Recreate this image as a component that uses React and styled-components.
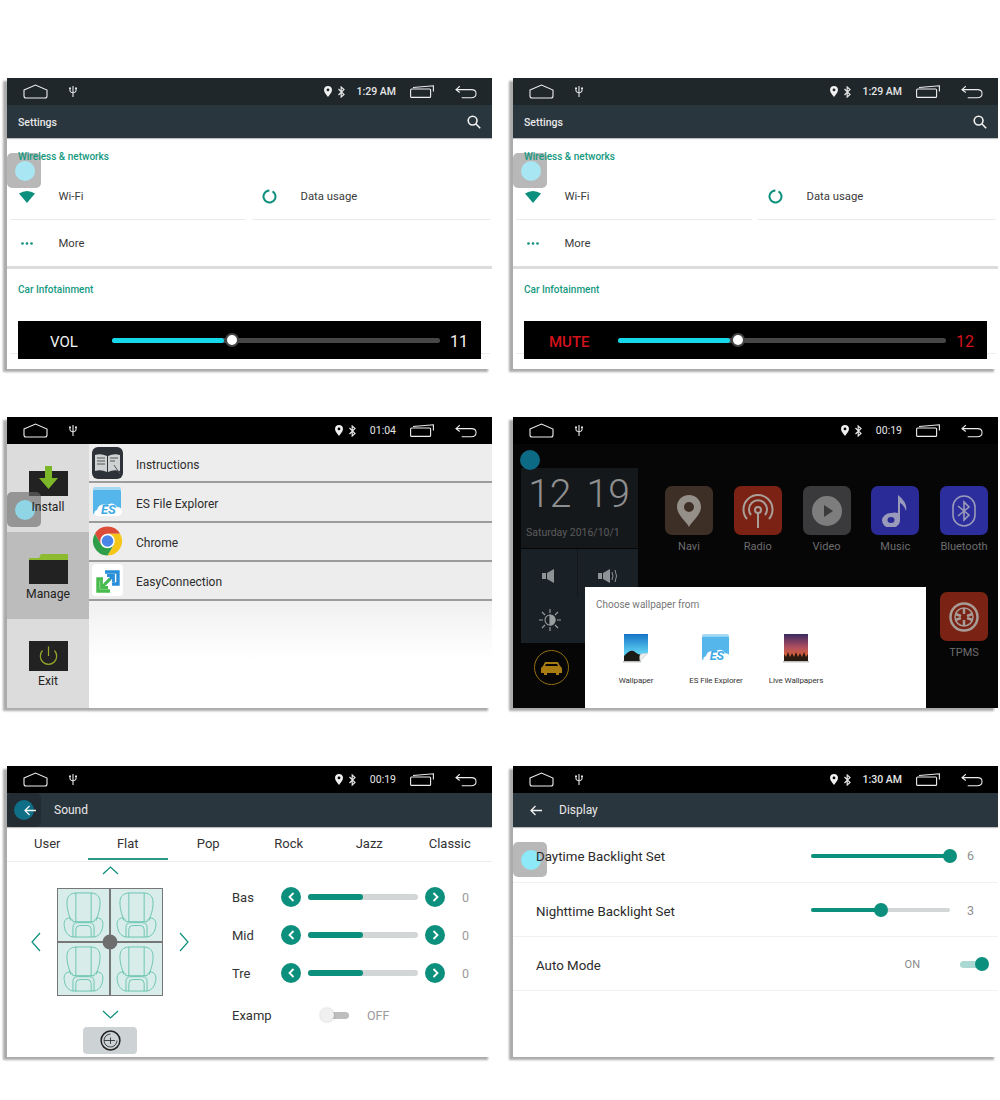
import styled, { createGlobalStyle } from "styled-components";

const TEAL = "#0c8f7c";

const GlobalStyle = createGlobalStyle`
  body {
    margin: 0;
    background: #fff;
    font-family: Roboto, "Liberation Sans", sans-serif;
  }
`;

const Page = styled.div`
  width: 1000px;
  min-height: 1100px;
  padding: 78px 0 0 7px;
  box-sizing: border-box;
`;

const ScreenRow = styled.div`
  display: grid;
  grid-template-columns: 485px 485px;
  column-gap: 21px;
  margin-top: ${(p) => p.$gap || 0}px;
`;

const Screen = styled.div`
  position: relative;
  height: 291px;
  display: flex;
  flex-direction: column;
  overflow: hidden;
  background: ${(p) => p.$bg || "#fff"};
`;

// the shadow is cut by overflow on Screen, so it sits on this wrapper
const ScreenFrame = styled.div`
  box-shadow: -4px 3px 2px rgba(0, 0, 0, 0.33);
`;

const Touch = styled.div`
  position: absolute;
  left: 0;
  top: ${(p) => p.$top}px;
  width: 34px;
  height: 35px;
  border-radius: 5px;
  background: ${(p) => (p.$dark ? "rgba(105,105,105,0.62)" : "rgba(140,140,140,0.62)")};
  display: flex;
  align-items: center;
  justify-content: center;
  &::after {
    content: "";
    width: 20px;
    height: 20px;
    margin-right: -2px;
    border-radius: 50%;
    background: ${(p) => p.$dot || "#a9e6f3"};
  }
`;

const StatusBar = styled.div`
  flex: none;
  height: 27px;
  display: flex;
  align-items: center;
  padding: 0 15px 0 16px;
  background: ${(p) => p.$bg || "#000"};
`;

const StatusRight = styled.div`
  margin-left: auto;
  display: flex;
  align-items: center;
`;

const Clock = styled.span`
  margin: 0 14px 0 14px;
  font-size: 10.5px;
  font-weight: ${(p) => (p.$width > 30 ? 500 : 400)};
  color: #e6e6e6;
  width: ${(p) => p.$width}px;
  display: flex;
  justify-content: flex-end;
  white-space: nowrap;
`;

const UsbSlot = styled.svg`
  margin-left: 21px;
`;

const RecentSlot = styled.svg`
  margin-right: 21px;
`;

const BtSlot = styled.svg`
  margin-left: 6px;
`;

const Toolbar = styled.div`
  flex: none;
  height: ${(p) => p.$h || 33}px;
  display: flex;
  align-items: center;
  background: #29363d;
  color: #e9e9e9;
  font-size: ${(p) => p.$size || 10.5}px;
  font-weight: ${(p) => p.$weight || 400};
  box-shadow: 0 1px 1px rgba(0, 0, 0, 0.25);
  position: relative;
  z-index: 1;
`;

const ToolbarTitle = styled.span`
  margin-left: ${(p) => p.$left}px;
  padding-top: ${(p) => p.$nudge || 0}px;
`;

const SearchSlot = styled.svg`
  margin-left: auto;
  margin-right: 11px;
`;

const BackButton = styled.div`
  width: 34px;
  height: 34px;
  display: flex;
  align-items: center;
  justify-content: flex-end;
  padding-right: 5px;
  box-sizing: border-box;
  border-radius: 5px;
  background: ${(p) => (p.$active ? "#222c32" : "transparent")};
  position: relative;
  &::before {
    content: "";
    display: ${(p) => (p.$active ? "block" : "none")};
    position: absolute;
    left: 7px;
    top: 7px;
    width: 20px;
    height: 20px;
    border-radius: 50%;
    background: #0f6f87;
  }
  svg {
    position: relative;
  }
`;

/* settings */
const SectionTitle = styled.div`
  position: relative;
  z-index: 2;
  padding: 12px 0 0 11px;
  font-size: 10px;
  line-height: 14px;
  font-weight: 500;
  color: #16997f;
`;

const ItemGrid = styled.div`
  display: grid;
  grid-template-columns: 236px 238px;
  column-gap: 6px;
  padding: 9px 0 0 3px;
`;

const Item = styled.div`
  height: ${(p) => p.$h}px;
  display: flex;
  align-items: center;
  font-size: 11.3px;
  color: #3b3b3b;
  box-sizing: border-box;
  border-bottom: ${(p) => (p.$line ? "1px solid #eaeaea" : "none")};
`;

const ItemIcon = styled.div`
  width: 34px;
  margin-right: 14.5px;
  display: flex;
  justify-content: center;
`;

const Band = styled.div`
  height: 3px;
  background: #dcdcdc;
  margin-bottom: 2px;
  box-shadow: 0 5px 0 -4px #eee;
`;

const VolumeWrap = styled.div`
  position: relative;
  margin-top: 24px;
  &::before {
    content: "";
    position: absolute;
    left: 3px;
    right: 2px;
    top: 32px;
    height: 1px;
    background: #eee;
  }
`;

const VolumeBar = styled.div`
  position: relative;
  margin: 0 11px;
  height: 38px;
  background: #000;
  display: flex;
  align-items: center;
  padding-left: 32px;
  color: ${(p) => (p.$mute ? "#d3121c" : "#f2f2f2")};
  font-size: 15px;
`;

const VolumeLabel = styled.span`
  width: 62px;
  margin-left: ${(p) => (p.$mute ? -7 : 0)}px;
  padding: 4px ${(p) => (p.$mute ? 7 : 0)}px 0 0;
  box-sizing: content-box;
  font-weight: ${(p) => (p.$mute ? 500 : 400)};
`;

const VolumeValue = styled.span`
  margin-left: 10px;
  padding-top: 2px;
  font-size: 16px;
`;

const SliderTrack = styled.div`
  position: relative;
  width: ${(p) => p.$w}px;
  height: ${(p) => p.$h}px;
  border-radius: ${(p) => p.$h / 2}px;
  background: ${(p) => p.$bg};
`;

const SliderFill = styled.div`
  height: 100%;
  border-radius: inherit;
  background: ${(p) => p.$color};
`;

const VolumeThumb = styled.div`
  position: absolute;
  top: 50%;
  width: 10px;
  height: 10px;
  border-radius: 50%;
  background: #fff;
  border: 2px solid #444;
  box-sizing: content-box;
  transform: translate(-50%, -50%);
`;

const RoundThumb = styled.div`
  position: absolute;
  top: 50%;
  width: 14px;
  height: 14px;
  border-radius: 50%;
  background: ${TEAL};
  transform: translate(-50%, -50%);
`;

/* install manager */
const ManagerBody = styled.div`
  flex: 1;
  display: flex;
  min-height: 0;
`;

const Sidebar = styled.div`
  width: 82px;
  flex: none;
  display: flex;
  flex-direction: column;
  background: #dcdcdc;
`;

const SideItem = styled.div`
  height: ${(p) => p.$h}px;
  padding-top: 22px;
  box-sizing: border-box;
  display: flex;
  flex-direction: column;
  align-items: center;
  background: ${(p) => (p.$active ? "#bcbcbc" : "transparent")};
  font-size: 12.2px;
  line-height: 16px;
  color: #222;
  span {
    position: relative;
    z-index: 2;
    margin-top: ${(p) => p.$labelGap}px;
  }
`;

const AppList = styled.div`
  flex: 1;
  display: flex;
  flex-direction: column;
`;

const AppRow = styled.div`
  height: 39.25px;
  box-sizing: border-box;
  flex: none;
  display: flex;
  align-items: center;
  padding-left: 3px;
  background: #ededed;
  border-bottom: 2px solid #9c9c9c;
  font-size: 12px;
  color: #2c2c2c;
  svg {
    margin-right: 13px;
    flex: none;
  }
  span {
    padding-top: 4px;
  }
`;

const ListRest = styled.div`
  flex: 1;
  background: linear-gradient(#f0f0f0, #fff 55%);
`;

/* home */
const HomeBody = styled.div`
  flex: 1;
  display: flex;
  padding: 24px 0 0 8px;
`;

const HomeLeft = styled.div`
  width: 117px;
  flex: none;
`;

const ClockPanel = styled.div`
  height: 80px;
  background: #15181b;
  padding: 4px 0 0 5px;
  box-sizing: border-box;
`;

const BigClock = styled.div`
  display: flex;
  gap: 15px;
  justify-content: center;
  padding-right: 6px;
  font-size: 39px;
  line-height: 45px;
  font-weight: 300;
  color: #8f8f8f;
`;

const DateLine = styled.div`
  margin-top: 9px;
  font-size: 10.5px;
  color: #5c5c5c;
  white-space: nowrap;
`;

const ControlGrid = styled.div`
  margin-top: 1px;
  height: 94px;
  display: grid;
  grid-template-columns: 57px 60px;
  grid-template-rows: 47px 47px;
  background: #192126;
  > div {
    display: flex;
    align-items: center;
    justify-content: center;
  }
  > div:nth-child(-n + 2) {
    padding-top: 6px;
  }
  > div:first-child {
    border-right: 1px solid #10161a;
  }
`;

const CarBadge = styled.div`
  margin: 7px 0 0 13px;
  width: 33px;
  height: 33px;
  border-radius: 50%;
  border: 1px solid #94700f;
  display: flex;
  align-items: center;
  justify-content: center;
`;

const AppGrid = styled.div`
  margin: 18px 0 0 27px;
  display: grid;
  grid-template-columns: repeat(5, 48px);
  column-gap: 20.75px;
  row-gap: 38px;
  align-content: start;
`;

const AppCell = styled.div`
  grid-column: ${(p) => p.$col || "auto"};
  display: flex;
  flex-direction: column;
  align-items: center;
  color: #6d6d6d;
  font-size: 11px;
  line-height: 14px;
  white-space: nowrap;
`;

const Tile = styled.div`
  width: 48px;
  height: ${(p) => p.$h || 49}px;
  margin-bottom: 5px;
  border-radius: 7px;
  background: ${(p) => p.$bg};
  display: flex;
  align-items: center;
  justify-content: center;
`;

const WallDialog = styled.div`
  position: absolute;
  left: 72px;
  right: 72px;
  bottom: 0;
  height: 121px;
  background: #fff;
  padding: 10px 11px 0;
  box-sizing: border-box;
`;

const WallTitle = styled.div`
  font-size: 10px;
  line-height: 16px;
  color: #777;
`;

const WallRow = styled.div`
  margin-top: 20px;
  display: flex;
`;

const WallItem = styled.div`
  width: 80px;
  display: flex;
  flex-direction: column;
  align-items: center;
  font-size: 8px;
  line-height: 12px;
  letter-spacing: -0.1px;
  color: #333;
  white-space: nowrap;
  span {
    margin-top: 12px;
  }
`;

/* sound */
const Tabs = styled.div`
  flex: none;
  height: 35px;
  display: grid;
  grid-template-columns: repeat(6, 80.5px);
  border-bottom: 1px solid #ececec;
  box-sizing: border-box;
`;

const Tab = styled.div`
  display: flex;
  align-items: center;
  justify-content: center;
  padding-top: 2px;
  font-size: 13px;
  color: #333;
  border-bottom: 2px solid ${(p) => (p.$active ? "#2a9988" : "transparent")};
  height: 33px;
  box-sizing: border-box;
`;

const SoundBody = styled.div`
  flex: 1;
  display: flex;
`;

const FaderPanel = styled.div`
  width: 206px;
  flex: none;
  padding-top: 4px;
  display: flex;
  flex-direction: column;
  align-items: center;
`;

const FaderMiddle = styled.div`
  margin: 13px 0 14px;
  display: flex;
  align-items: center;
  gap: 16px;
`;

const SeatPad = styled.div`
  position: relative;
  width: 106px;
  height: 108px;
  box-sizing: border-box;
  display: grid;
  grid-template-columns: 1fr 1fr;
  grid-template-rows: 1fr 1fr;
  gap: 1.5px;
  border: 1.5px solid #777;
  background: #777;
`;

const SeatCell = styled.div`
  background: #d8edea;
  display: flex;
  align-items: center;
  justify-content: center;
`;

const SeatDot = styled.div`
  position: absolute;
  left: 50%;
  top: 50%;
  width: 15px;
  height: 15px;
  border-radius: 50%;
  background: #6e6e6e;
  transform: translate(-50%, -50%);
`;

const ResetButton = styled.div`
  margin-top: 8px;
  width: 54px;
  height: 27px;
  border-radius: 4px;
  background: #cdd2d5;
  display: flex;
  align-items: center;
  justify-content: center;
`;

const EqPanel = styled.div`
  padding: 16px 0 0 19px;
`;

const EqRow = styled.div`
  height: 38px;
  display: grid;
  column-gap: 7px;
  grid-template-columns: 42px 20px 110px 20px 17px;
  align-items: center;
  font-size: 13px;
  color: #333;
`;

const EqValue = styled.span`
  justify-self: end;
  color: #9a9a9a;
  font-size: 12.5px;
`;

const StepButton = styled.div`
  width: 20px;
  height: 20px;
  border-radius: 50%;
  background: ${TEAL};
  display: flex;
  align-items: center;
  justify-content: center;
`;

const ExampRow = styled.div`
  margin-top: 4px;
  height: 38px;
  display: flex;
  align-items: center;
  font-size: 13px;
  color: #333;
`;

const ExampLabel = styled.span`
  width: 88px;
`;

const OffLabel = styled.span`
  margin-left: 18px;
  font-size: 12.5px;
  color: #9a9a9a;
`;

const Toggle = styled.div`
  position: relative;
  width: 29px;
  height: 14px;
  &::before {
    content: "";
    position: absolute;
    top: 3.5px;
    left: ${(p) => (p.$on ? 0 : 5)}px;
    width: 24px;
    height: 7px;
    border-radius: 4px;
    background: ${(p) => (p.$on ? "#a9d9d2" : "#bdbdbd")};
  }
  &::after {
    content: "";
    position: absolute;
    top: 0;
    left: ${(p) => (p.$on ? 15 : 0)}px;
    width: 14px;
    height: 14px;
    border-radius: 50%;
    background: ${(p) => (p.$on ? TEAL : "#f0f0f0")};
    box-shadow: ${(p) => (p.$on ? "none" : "0 0 2px rgba(0,0,0,0.25)")};
  }
`;

/* display */
const DisplayRow = styled.div`
  position: relative;
  z-index: 2;
  height: ${(p) => p.$h || 54}px;
  box-sizing: border-box;
  display: flex;
  align-items: center;
  padding: ${(p) => p.$top || 1}px ${(p) => p.$right || 23}px 0 23px;
  border-bottom: 1px solid #f1f1f1;
  font-size: 13.3px;
  color: #2b2b2b;
`;

const DisplayLabel = styled.span`
  padding-top: 2px;
`;

const DisplayRight = styled.div`
  margin-left: auto;
  display: flex;
  align-items: center;
  gap: ${(p) => p.$gap}px;
`;

const DisplayValue = styled.span`
  width: 8px;
  font-size: 12.5px;
  color: #8f8f8f;
`;

const OnLabel = styled.span`
  font-size: 11px;
  color: #8a8a8a;
`;

/* drawings */
function HomeIcon() {
  return (
    <svg width="25" height="15" viewBox="0 0 25 15" fill="none" stroke="#eee" strokeWidth="1.1">
      <path d="M1 6 L12.5 1 L24 6 V12 Q24 14 22 14 H3 Q1 14 1 12 Z" />
    </svg>
  );
}

function UsbIcon() {
  return (
    <UsbSlot width="8" height="11" viewBox="0 0 8 11" fill="none" stroke="#e6e6e6" strokeWidth="1.1">
      <path d="M4 0 V11 M1 2 V5 Q1 6 4 7 Q7 6 7 5 V2" />
      <path d="M0 1.5 H2 V3 H0 Z M6 1.5 H8 V3 H6 Z" fill="#e6e6e6" stroke="none" />
    </UsbSlot>
  );
}

function PinIcon() {
  return (
    <svg width="8" height="11" viewBox="0 0 8 11">
      <path fillRule="evenodd" fill="#f0f0f0" d="M4 0 C6.4 0 8 1.7 8 3.9 C8 6.4 5.2 9 4 11 C2.8 9 0 6.4 0 3.9 C0 1.7 1.6 0 4 0 Z M4 2.5 A1.4 1.4 0 1 0 4 5.3 A1.4 1.4 0 1 0 4 2.5 Z" />
    </svg>
  );
}

function BluetoothIcon() {
  return (
    <BtSlot width="7" height="12" viewBox="0 0 7 12" fill="none" stroke="#e6e6e6" strokeWidth="1.2">
      <path d="M0.5 3 L6 8.5 L3.2 11 V1 L6 3.5 L0.5 9" />
    </BtSlot>
  );
}

function RecentIcon() {
  return (
    <RecentSlot width="24" height="13" viewBox="0 0 24 13" fill="none" stroke="#eee" strokeWidth="1.1">
      <path d="M3 2.5 L23.4 0.8 V6.5" />
      <rect x="0.6" y="4" width="20" height="8.4" rx="1" />
    </RecentSlot>
  );
}

function BackNavIcon() {
  return (
    <svg width="22" height="14" viewBox="0 0 23 14" fill="none" stroke="#eee" strokeWidth="1.1">
      <path d="M5 1 L1 4.5 L5 7.5 M1 4.5 H17 Q22 4.5 22 8.5 Q22 13 17 13 H7" />
    </svg>
  );
}

function Status({ time, width, bg }) {
  return (
    <StatusBar $bg={bg}>
      <HomeIcon />
      <UsbIcon />
      <StatusRight>
        <PinIcon />
        <BluetoothIcon />
        <Clock $width={width}>{time}</Clock>
        <RecentIcon />
        <BackNavIcon />
      </StatusRight>
    </StatusBar>
  );
}

function SearchIcon() {
  return (
    <SearchSlot width="14" height="14" viewBox="0 0 14 14" fill="none" stroke="#f2f2f2" strokeWidth="1.6">
      <circle cx="5.6" cy="5.6" r="4.4" />
      <path d="M8.8 8.8 L13.2 13.2" />
    </SearchSlot>
  );
}

function ArrowLeft() {
  return (
    <svg width="12" height="11" viewBox="0 0 12 11" fill="none" stroke="#f2f2f2" strokeWidth="1.3">
      <path d="M12 5.5 H1 M5.5 1 L1 5.5 L5.5 10" />
    </svg>
  );
}

function WifiIcon() {
  return (
    <svg width="16" height="13" viewBox="0 0 16 13">
      <path fill={TEAL} d="M0 3.4 Q8 -1.6 16 3.4 L8 13 Z" />
    </svg>
  );
}

function DataIcon() {
  return (
    <svg width="15" height="15" viewBox="0 0 15 15" fill="none" stroke={TEAL} strokeWidth="2">
      <circle cx="7.5" cy="7.5" r="6" strokeDasharray="33.5 4.2" transform="rotate(-60 7.5 7.5)" />
    </svg>
  );
}

function DotsIcon() {
  return (
    <svg width="12" height="3" viewBox="0 0 12 3" fill={TEAL}>
      <circle cx="1.5" cy="1.5" r="1.3" />
      <circle cx="6" cy="1.5" r="1.3" />
      <circle cx="10.5" cy="1.5" r="1.3" />
    </svg>
  );
}

function Volume({ label, value, mute }) {
  return (
    <VolumeWrap>
      <VolumeBar $mute={mute}>
        <VolumeLabel $mute={mute}>{label}</VolumeLabel>
        <SliderTrack $w={328} $h={5} $bg="#474747">
          <SliderFill $color="#15d8ea" style={{ width: "34%" }} />
          <VolumeThumb style={{ left: "36.6%" }} />
        </SliderTrack>
        <VolumeValue>{value}</VolumeValue>
      </VolumeBar>
    </VolumeWrap>
  );
}

function SettingsScreen({ label, value, mute }) {
  return (
    <ScreenFrame>
      <Screen>
        <Status time="1:29 AM" width={37} bg="#1f272b" />
        <Toolbar $weight={500}>
          <ToolbarTitle $left={11} $nudge={1}>Settings</ToolbarTitle>
          <SearchIcon />
        </Toolbar>
        <SectionTitle>Wireless &amp; networks</SectionTitle>
        <ItemGrid>
          <Item $h={47} $line>
            <ItemIcon>
              <WifiIcon />
            </ItemIcon>
            Wi-Fi
          </Item>
          <Item $h={47} $line>
            <ItemIcon>
              <DataIcon />
            </ItemIcon>
            Data usage
          </Item>
          <Item $h={46}>
            <ItemIcon>
              <DotsIcon />
            </ItemIcon>
            More
          </Item>
        </ItemGrid>
        <Band />
        <SectionTitle>Car Infotainment</SectionTitle>
        <Volume label={label} value={value} mute={mute} />
        <Touch $top={75} />
      </Screen>
    </ScreenFrame>
  );
}

function InstallIcon() {
  return (
    <svg width="39" height="30" viewBox="0 0 39 30">
      <rect y="5" width="39" height="25" fill="#222" />
      <path fill="#7cb72a" d="M16 0 H23 V12 H29 L19.5 23 L10 12 H16 Z" />
    </svg>
  );
}

function FolderIcon() {
  return (
    <svg width="39" height="30" viewBox="0 0 39 30">
      <path fill="#8cbb2f" d="M0 4 L10 4 L12 0 H39 V8 H0 Z" />
      <rect y="6" width="39" height="24" fill="#222" />
    </svg>
  );
}

function ExitIcon() {
  return (
    <svg width="39" height="30" viewBox="0 0 39 30" fill="none">
      <rect width="39" height="30" fill="#222" />
      <path d="M13.5 9.5 A8.2 8.2 0 1 0 25.5 9.5 M19.5 5.5 V15" stroke="#9aa92b" strokeWidth="1.2" />
    </svg>
  );
}

function BookIcon() {
  return (
    <svg width="31" height="32" viewBox="0 0 31 32">
      <rect width="31" height="32" rx="6" fill="#2d3238" />
      <path fill="#cfd2d3" d="M3 8 Q9 6 15 9 V25 Q9 22 3 24 Z M16 9 Q22 6 28 8 V24 Q22 22 16 25 Z" />
      <path stroke="#555" strokeWidth="1" fill="none" d="M5 11 H13 M5 14 H13 M5 17 H13 M18 11 H26 M18 14 H23 M22 18 L28 27" />
    </svg>
  );
}

function EsIcon({ size = 31 }) {
  return (
    <svg width={size} height={size} viewBox="0 0 31 31">
      <path fill="#a5d8f3" d="M1 3 Q1 1 3 1 H27 Q29 1 29 3 V6 H1 Z" />
      <rect x="1" y="4" width="28" height="24" rx="1.5" fill="#55b6ec" />
      <path fill="#fff" d="M3 29 Q1 25 5 24 Q7 17 15 19 Q21 15 25 21 Q30 21 30 26 Q29 30 26 30 H6 Q4 30 3 29 Z" />
      <text x="9" y="28" fontSize="13" fontWeight="700" fontStyle="italic" fill="#3da9e4" fontFamily="Roboto, sans-serif">ES</text>
    </svg>
  );
}

function ChromeIcon() {
  return (
    <svg width="31" height="32" viewBox="0 0 32 32">
      <path fill="#dd4b39" d="M3 8.5 A15 15 0 0 1 29 8.5 H16 L9.5 19.75 Z" />
      <path fill="#f5c518" d="M29 8.5 A15 15 0 0 1 16 31 L22.5 19.75 L16 8.5 Z" />
      <path fill="#2f9e49" d="M16 31 A15 15 0 0 1 3 8.5 L9.5 19.75 H22.5 Z" />
      <circle cx="16" cy="16" r="7.5" fill="#fff" />
      <circle cx="16" cy="16" r="6" fill="#4a86e8" />
    </svg>
  );
}

function EasyIcon() {
  return (
    <svg width="31" height="32" viewBox="0 0 31 32" fill="none">
      <rect width="31" height="32" rx="4" fill="#fff" />
      <path stroke="#2a8fd8" strokeWidth="3.4" d="M13 8 H26 V20 H20" />
      <path stroke="#2a8fd8" strokeWidth="2.8" d="M13 20 L21 12 M15 11.5 H21.5 V18" />
      <path stroke="#47bb4c" strokeWidth="3.4" d="M18 27 H6 V15 H11" />
      <path stroke="#47bb4c" strokeWidth="2.8" d="M18 15 L10 23 M9.5 16.5 V23.5 H16" />
    </svg>
  );
}

function ManagerScreen() {
  const apps = [
    { name: "Instructions", icon: <BookIcon /> },
    { name: "ES File Explorer", icon: <EsIcon /> },
    { name: "Chrome", icon: <ChromeIcon /> },
    { name: "EasyConnection", icon: <EasyIcon /> },
  ];
  return (
    <ScreenFrame>
      <Screen>
        <Status time="01:04" width={26} />
        <ManagerBody>
          <Sidebar>
            <SideItem $h={88} $labelGap={3}>
              <InstallIcon />
              <span>Install</span>
            </SideItem>
            <SideItem $h={87} $labelGap={2} $active>
              <FolderIcon />
              <span>Manage</span>
            </SideItem>
            <SideItem $h={89} $labelGap={2}>
              <ExitIcon />
              <span>Exit</span>
            </SideItem>
          </Sidebar>
          <AppList>
            {apps.map((app) => (
              <AppRow key={app.name}>
                {app.icon}
                <span>{app.name}</span>
              </AppRow>
            ))}
            <ListRest />
          </AppList>
        </ManagerBody>
        <Touch $top={75} $dark $dot="#8fd5e6" />
      </Screen>
    </ScreenFrame>
  );
}

const NaviArt = () => (
  <svg width="24" height="32" viewBox="0 0 24 32">
    <path fillRule="evenodd" fill="#948f88" d="M12 0 C19 0 24 5 24 12 C24 20 15 26 12 32 C9 26 0 20 0 12 C0 5 5 0 12 0 Z M12 7 A5 5 0 1 0 12 17 A5 5 0 1 0 12 7 Z" />
  </svg>
);

const RadioArt = () => (
  <svg width="32" height="34" viewBox="0 0 32 34" fill="none" stroke="#a89f99" strokeWidth="2">
    <circle cx="16" cy="16" r="3" />
    <path d="M16 19 V34 M9 21 A9 9 0 1 1 23 21 M5 25 A14.5 14.5 0 1 1 27 25" />
  </svg>
);

const VideoArt = () => (
  <svg width="30" height="30" viewBox="0 0 30 30">
    <circle cx="15" cy="15" r="15" fill="#7d7d7d" />
    <path d="M12 9 L21 15 L12 21 Z" fill="#3a3a3a" />
  </svg>
);

const MusicArt = () => (
  <svg width="26" height="32" viewBox="0 0 26 32" fill="#9a9abb">
    <path fillRule="evenodd" d="M9 18 A9 7.5 0 1 0 18 26 V8 Q22 10 24 16 Q26 8 16 0 V18 Q13 17 9 18 Z M9 22 A3.5 3 0 1 0 9 28 A3.5 3 0 1 0 9 22 Z" />
  </svg>
);

const BluetoothArt = () => (
  <svg width="24" height="32" viewBox="0 0 24 32" fill="none" stroke="#9a9abb" strokeWidth="1.6">
    <rect x="1" y="1" width="22" height="30" rx="11" />
    <path d="M6 11 L17 20 L12 25 V7 L17 12 L6 21" />
  </svg>
);

const WheelArt = () => (
  <svg width="30" height="30" viewBox="0 0 30 30" fill="none" stroke="#a89c96">
    <circle cx="15" cy="15" r="13.5" strokeWidth="2.5" />
    <circle cx="15" cy="15" r="9" strokeWidth="1.5" />
    <path d="M15 6 V12 M15 18 V24 M6.5 12 L12 14 M18 16 L23.5 18 M6.5 18 L12 16 M18 14 L23.5 12" strokeWidth="2.5" />
  </svg>
);

function SpeakerArt({ loud }) {
  return (
    <svg width={loud ? 20 : 14} height="16" viewBox={loud ? "0 0 20 16" : "0 0 14 16"} fill="#8e9396">
      <rect x="0" y="5" width="4" height="6" />
      <path d="M5 5 L12 1 V15 L5 11 Z" />
      {loud && <path d="M14 4 Q16 8 14 12 M17 2 Q20 8 17 14" fill="none" stroke="#8e9396" />}
    </svg>
  );
}

const SunArt = () => (
  <svg width="22" height="22" viewBox="0 0 22 22" stroke="#9a9fa1" strokeWidth="1.1" fill="none">
    <circle cx="11" cy="11" r="5" />
    <path d="M11 6 A5 5 0 0 1 11 16 Z" fill="#9a9fa1" />
    <path d="M11 0 V4 M11 18 V22 M0 11 H4 M18 11 H22 M3 3 L6 6 M16 16 L19 19 M3 19 L6 16 M16 6 L19 3" />
  </svg>
);

const CarArt = () => (
  <svg width="21" height="14" viewBox="0 0 21 14" fill="#a87c12">
    <path d="M4 1 H17 L19 5 Q21 6 21 8 V12 H18 V14 H15 V12 H6 V14 H3 V12 H0 V8 Q0 6 2 5 Z M5 3 L4 5 H17 L16 3 Z" fillRule="evenodd" />
  </svg>
);

const WallpaperArt = () => (
  <svg width="26" height="30" viewBox="0 0 26 30">
    <defs>
      <linearGradient id="skyFill" x1="0" y1="0" x2="0" y2="1">
        <stop offset="0" stopColor="#1573c6" />
        <stop offset="0.7" stopColor="#5fd0f2" />
      </linearGradient>
    </defs>
    <path fill="url(#skyFill)" d="M1 1 H25 V20 L17 28 H1 Z" />
    <path fill="#1c1c16" d="M1 23 Q8 15 12 19 Q15 22 19 22 L17 28 H1 Z" />
    <path fill="#eee" stroke="#ccc" strokeWidth="0.5" d="M25 20 L17 28 Q16 22 18 21 Z" />
    <rect x="0" y="28" width="18" height="1.4" fill="#bbb" />
  </svg>
);

const LiveArt = () => (
  <svg width="26" height="30" viewBox="0 0 26 30">
    <defs>
      <linearGradient id="liveFill" x1="0" y1="0" x2="0" y2="1">
        <stop offset="0" stopColor="#3a2a63" />
        <stop offset="0.5" stopColor="#b2505e" />
        <stop offset="0.8" stopColor="#d8603a" />
      </linearGradient>
    </defs>
    <rect x="1" y="1" width="24" height="27" fill="url(#liveFill)" />
    <path fill="#2a1a10" d="M1 28 V21 L3 24 L5 19 L7 24 L9 20 L11 24 L13 19 L15 24 L17 20 L19 24 L21 19 L23 24 L25 21 V28 Z" />
    <rect x="0" y="28" width="26" height="1.4" fill="#bbb" />
  </svg>
);

const HomeDot = styled.div`
  position: absolute;
  left: 7px;
  top: 33px;
  width: 20px;
  height: 20px;
  border-radius: 50%;
  background: #0d6a84;
`;

function HomeScreen() {
  const tiles = [
    { name: "Navi", bg: "#3e2f26", art: <NaviArt /> },
    { name: "Radio", bg: "#7b2214", art: <RadioArt /> },
    { name: "Video", bg: "#3a3a3c", art: <VideoArt /> },
    { name: "Music", bg: "#2a2b96", art: <MusicArt /> },
    { name: "Bluetooth", bg: "#2b2e9c", art: <BluetoothArt /> },
  ];
  return (
    <ScreenFrame>
      <Screen $bg="#060607">
        <Status time="00:19" width={26} />
        <HomeBody>
          <HomeLeft>
            <ClockPanel>
              <BigClock>
                <span>12</span>
                <span>19</span>
              </BigClock>
              <DateLine>Saturday 2016/10/1</DateLine>
            </ClockPanel>
            <ControlGrid>
              <div>
                <SpeakerArt />
              </div>
              <div>
                <SpeakerArt loud />
              </div>
              <div>
                <SunArt />
              </div>
            </ControlGrid>
            <CarBadge>
              <CarArt />
            </CarBadge>
          </HomeLeft>
          <AppGrid>
            {tiles.map((t) => (
              <AppCell key={t.name}>
                <Tile $bg={t.bg}>{t.art}</Tile>
                {t.name}
              </AppCell>
            ))}
            <AppCell $col={5}>
              <Tile $bg="#7a2213" $h={49}>
                <WheelArt />
              </Tile>
              TPMS
            </AppCell>
          </AppGrid>
        </HomeBody>
        <HomeDot />
        <WallDialog>
          <WallTitle>Choose wallpaper from</WallTitle>
          <WallRow>
            <WallItem>
              <WallpaperArt />
              <span>Wallpaper</span>
            </WallItem>
            <WallItem>
              <EsIcon size={30} />
              <span>ES File Explorer</span>
            </WallItem>
            <WallItem>
              <LiveArt />
              <span>Live Wallpapers</span>
            </WallItem>
          </WallRow>
        </WallDialog>
      </Screen>
    </ScreenFrame>
  );
}

function Chevron({ dir }) {
  const horizontal = dir === "left" || dir === "right";
  const paths = {
    up: "M1 8 L8.5 1 L16 8",
    down: "M1 1 L8.5 8 L16 1",
    left: "M9 1 L1 10 L9 19",
    right: "M1 1 L9 10 L1 19",
  };
  return (
    <svg
      width={horizontal ? 10 : 17}
      height={horizontal ? 20 : 9}
      viewBox={horizontal ? "0 0 10 20" : "0 0 17 9"}
      fill="none"
      stroke={TEAL}
      strokeWidth="1.2"
    >
      <path d={paths[dir]} />
    </svg>
  );
}

function Seat() {
  return (
    <svg width="41" height="46" viewBox="0 0 42 48" fill="none" stroke="#5cbfa9" strokeWidth="0.9">
      <path d="M8 30 C5 22 3 15 4 8 C5 3 9 1 14 1 H28 C33 1 37 3 38 8 C39 15 37 22 34 30" />
      <path d="M13 1 V31 M29 1 V31" />
      <path d="M7 27 C2 27 0 31 1 36 C2 43 6 47 11 47 H31 C36 47 40 43 41 36 C42 31 40 27 35 27 C33 28 32 30 32 31 H10 C10 30 9 28 7 27 Z" />
      <path d="M10 47 V37 Q10 32 15 32 H27 Q32 32 32 37 V47" />
      <path d="M13 47 V39 Q13 35 17 35 H25 Q29 35 29 39 V47" />
    </svg>
  );
}

function ResetIcon() {
  return (
    <svg width="21" height="21" viewBox="0 0 21 21" fill="none" stroke="#222">
      <circle cx="10.5" cy="10.5" r="9.4" strokeWidth="1.5" />
      <path d="M10.5 4 A6.5 6.5 0 1 0 17 10.5" strokeWidth="0.8" />
      <path d="M4 10.5 H15 M10.5 7.5 V14" strokeWidth="0.8" />
    </svg>
  );
}

function StepIcon({ right }) {
  return (
    <svg width="7" height="10" viewBox="0 0 7 10" fill="none" stroke="#fff" strokeWidth="1.8">
      <path d={right ? "M1.5 1 L5.5 5 L1.5 9" : "M5.5 1 L1.5 5 L5.5 9"} />
    </svg>
  );
}

function EqBand({ name }) {
  return (
    <EqRow>
      <span>{name}</span>
      <StepButton>
        <StepIcon />
      </StepButton>
      <SliderTrack $w={110} $h={6} $bg="#d2d6d6">
        <SliderFill $color={TEAL} style={{ width: "50%" }} />
      </SliderTrack>
      <StepButton>
        <StepIcon right />
      </StepButton>
      <EqValue>0</EqValue>
    </EqRow>
  );
}

function SoundScreen() {
  const tabs = ["User", "Flat", "Pop", "Rock", "Jazz", "Classic"];
  return (
    <ScreenFrame>
      <Screen>
        <Status time="00:19" width={26} />
        <Toolbar $h={34} $size={12}>
          <BackButton $active>
            <ArrowLeft />
          </BackButton>
          <ToolbarTitle $left={13}>Sound</ToolbarTitle>
        </Toolbar>
        <Tabs>
          {tabs.map((t) => (
            <Tab key={t} $active={t === "Flat"}>
              {t}
            </Tab>
          ))}
        </Tabs>
        <SoundBody>
          <FaderPanel>
            <Chevron dir="up" />
            <FaderMiddle>
              <Chevron dir="left" />
              <SeatPad>
                <SeatCell>
                  <Seat />
                </SeatCell>
                <SeatCell>
                  <Seat />
                </SeatCell>
                <SeatCell>
                  <Seat />
                </SeatCell>
                <SeatCell>
                  <Seat />
                </SeatCell>
                <SeatDot />
              </SeatPad>
              <Chevron dir="right" />
            </FaderMiddle>
            <Chevron dir="down" />
            <ResetButton>
              <ResetIcon />
            </ResetButton>
          </FaderPanel>
          <EqPanel>
            <EqBand name="Bas" />
            <EqBand name="Mid" />
            <EqBand name="Tre" />
            <ExampRow>
              <ExampLabel>Examp</ExampLabel>
              <Toggle />
              <OffLabel>OFF</OffLabel>
            </ExampRow>
          </EqPanel>
        </SoundBody>
      </Screen>
    </ScreenFrame>
  );
}

function BacklightRow({ label, value, pct, h, top }) {
  return (
    <DisplayRow $h={h} $top={top}>
      <DisplayLabel>{label}</DisplayLabel>
      <DisplayRight $gap={17}>
        <SliderTrack $w={139} $h={4} $bg="#d2d6d6">
          <SliderFill $color={TEAL} style={{ width: `${pct}%` }} />
          <RoundThumb style={{ left: `${pct}%` }} />
        </SliderTrack>
        <DisplayValue>{value}</DisplayValue>
      </DisplayRight>
    </DisplayRow>
  );
}

function DisplayScreen() {
  return (
    <ScreenFrame>
      <Screen>
        <Status time="1:30 AM" width={37} />
        <Toolbar $h={34} $size={12}>
          <BackButton>
            <ArrowLeft />
          </BackButton>
          <ToolbarTitle $left={12}>Display</ToolbarTitle>
        </Toolbar>
        <BacklightRow label="Daytime Backlight Set" value="6" pct={100} h={56} top={2} />
        <BacklightRow label="Nighttime Backlight Set" value="3" pct={50} />
        <DisplayRow $right={9}>
          <DisplayLabel>Auto Mode</DisplayLabel>
          <DisplayRight $gap={40}>
            <OnLabel>ON</OnLabel>
            <Toggle $on />
          </DisplayRight>
        </DisplayRow>
        <Touch $top={76} $dot="#8de8f7" />
      </Screen>
    </ScreenFrame>
  );
}

export default function App() {
  return (
    <>
      <GlobalStyle />
      <Page>
        <ScreenRow>
          <SettingsScreen label="VOL" value="11" />
          <SettingsScreen label="MUTE" value="12" mute />
        </ScreenRow>
        <ScreenRow $gap={48}>
          <ManagerScreen />
          <HomeScreen />
        </ScreenRow>
        <ScreenRow $gap={58}>
          <SoundScreen />
          <DisplayScreen />
        </ScreenRow>
      </Page>
    </>
  );
}
